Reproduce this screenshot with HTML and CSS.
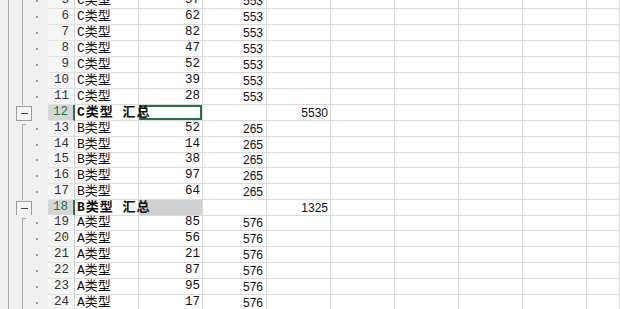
FILE: index.html
```html
<!DOCTYPE html>
<html lang="zh">
<head>
<meta charset="utf-8">
<title>分类汇总</title>
<link rel="stylesheet" href="styles.css">
</head>
<body>
<div class="sheet">
  <div class="row detail"><div class="ol"><span class="dot"></span></div><div class="rh">5</div><div class="c a">C类型</div><div class="c n mono">57</div><div class="c n c3">553</div><div class="c"></div><div class="c"></div><div class="c"></div><div class="c"></div><div class="c"></div><div class="c"></div></div>
  <div class="row detail"><div class="ol"><span class="dot"></span></div><div class="rh">6</div><div class="c a">C类型</div><div class="c n mono">62</div><div class="c n c3">553</div><div class="c"></div><div class="c"></div><div class="c"></div><div class="c"></div><div class="c"></div><div class="c"></div></div>
  <div class="row detail"><div class="ol"><span class="dot"></span></div><div class="rh">7</div><div class="c a">C类型</div><div class="c n mono">82</div><div class="c n c3">553</div><div class="c"></div><div class="c"></div><div class="c"></div><div class="c"></div><div class="c"></div><div class="c"></div></div>
  <div class="row detail"><div class="ol"><span class="dot"></span></div><div class="rh">8</div><div class="c a">C类型</div><div class="c n mono">47</div><div class="c n c3">553</div><div class="c"></div><div class="c"></div><div class="c"></div><div class="c"></div><div class="c"></div><div class="c"></div></div>
  <div class="row detail"><div class="ol"><span class="dot"></span></div><div class="rh">9</div><div class="c a">C类型</div><div class="c n mono">52</div><div class="c n c3">553</div><div class="c"></div><div class="c"></div><div class="c"></div><div class="c"></div><div class="c"></div><div class="c"></div></div>
  <div class="row detail"><div class="ol"><span class="dot"></span></div><div class="rh">10</div><div class="c a">C类型</div><div class="c n mono">39</div><div class="c n c3">553</div><div class="c"></div><div class="c"></div><div class="c"></div><div class="c"></div><div class="c"></div><div class="c"></div></div>
  <div class="row detail"><div class="ol"><span class="dot"></span></div><div class="rh">11</div><div class="c a">C类型</div><div class="c n mono">28</div><div class="c n c3">553</div><div class="c"></div><div class="c"></div><div class="c"></div><div class="c"></div><div class="c"></div><div class="c"></div></div>
  <div class="row summary"><div class="ol"><span class="box"></span></div><div class="rh sel-row">12</div><div class="c a"><span class="tot">C类型 汇总</span></div><div class="c sel"></div><div class="c"></div><div class="c n">5530</div><div class="c"></div><div class="c"></div><div class="c"></div><div class="c"></div><div class="c"></div></div>
  <div class="row detail gstart"><div class="ol"><span class="dot"></span></div><div class="rh">13</div><div class="c a">B类型</div><div class="c n mono">52</div><div class="c n c3">265</div><div class="c"></div><div class="c"></div><div class="c"></div><div class="c"></div><div class="c"></div><div class="c"></div></div>
  <div class="row detail short"><div class="ol"><span class="dot"></span></div><div class="rh">14</div><div class="c a">B类型</div><div class="c n mono">14</div><div class="c n c3">265</div><div class="c"></div><div class="c"></div><div class="c"></div><div class="c"></div><div class="c"></div><div class="c"></div></div>
  <div class="row detail"><div class="ol"><span class="dot"></span></div><div class="rh">15</div><div class="c a">B类型</div><div class="c n mono">38</div><div class="c n c3">265</div><div class="c"></div><div class="c"></div><div class="c"></div><div class="c"></div><div class="c"></div><div class="c"></div></div>
  <div class="row detail"><div class="ol"><span class="dot"></span></div><div class="rh">16</div><div class="c a">B类型</div><div class="c n mono">97</div><div class="c n c3">265</div><div class="c"></div><div class="c"></div><div class="c"></div><div class="c"></div><div class="c"></div><div class="c"></div></div>
  <div class="row detail"><div class="ol"><span class="dot"></span></div><div class="rh">17</div><div class="c a">B类型</div><div class="c n mono">64</div><div class="c n c3">265</div><div class="c"></div><div class="c"></div><div class="c"></div><div class="c"></div><div class="c"></div><div class="c"></div></div>
  <div class="row summary short"><div class="ol"><span class="box"></span></div><div class="rh sel-row">18</div><div class="c a"><span class="tot">B类型 汇总</span></div><div class="c fill"></div><div class="c"></div><div class="c n">1325</div><div class="c"></div><div class="c"></div><div class="c"></div><div class="c"></div><div class="c"></div></div>
  <div class="row detail gstart"><div class="ol"><span class="dot"></span></div><div class="rh">19</div><div class="c a">A类型</div><div class="c n mono">85</div><div class="c n c3">576</div><div class="c"></div><div class="c"></div><div class="c"></div><div class="c"></div><div class="c"></div><div class="c"></div></div>
  <div class="row detail"><div class="ol"><span class="dot"></span></div><div class="rh">20</div><div class="c a">A类型</div><div class="c n mono">56</div><div class="c n c3">576</div><div class="c"></div><div class="c"></div><div class="c"></div><div class="c"></div><div class="c"></div><div class="c"></div></div>
  <div class="row detail"><div class="ol"><span class="dot"></span></div><div class="rh">21</div><div class="c a">A类型</div><div class="c n mono">21</div><div class="c n c3">576</div><div class="c"></div><div class="c"></div><div class="c"></div><div class="c"></div><div class="c"></div><div class="c"></div></div>
  <div class="row detail"><div class="ol"><span class="dot"></span></div><div class="rh">22</div><div class="c a">A类型</div><div class="c n mono">87</div><div class="c n c3">576</div><div class="c"></div><div class="c"></div><div class="c"></div><div class="c"></div><div class="c"></div><div class="c"></div></div>
  <div class="row detail"><div class="ol"><span class="dot"></span></div><div class="rh">23</div><div class="c a">A类型</div><div class="c n mono">95</div><div class="c n c3">576</div><div class="c"></div><div class="c"></div><div class="c"></div><div class="c"></div><div class="c"></div><div class="c"></div></div>
  <div class="row detail"><div class="ol"><span class="dot"></span></div><div class="rh">24</div><div class="c a">A类型</div><div class="c n mono">17</div><div class="c n c3">576</div><div class="c"></div><div class="c"></div><div class="c"></div><div class="c"></div><div class="c"></div><div class="c"></div></div>
</div>
</body>
</html>
```

FILE: styles.css
```css
html, body {
  margin: 0;
  height: 100%;
  background: #ffffff;
  overflow: hidden;
}

.sheet {
  margin-top: -7px;
  font-family: "Liberation Sans", Arial, sans-serif;
  font-size: 12px;
  color: #111111;
}

.row {
  display: grid;
  grid-template-columns: 48px 27px repeat(8, 64px) 1fr;
  height: 16px;
}

.row.short {
  height: 15px;
}

/* outline gutter */
.ol {
  display: flex;
  align-items: center;
  background:
    linear-gradient(#a9a9a9, #a9a9a9) 8px 0 / 1px 100% no-repeat,
    #f0f0f0;
}

.detail .ol {
  background:
    linear-gradient(#a9a9a9, #a9a9a9) 8px 0 / 1px 100% no-repeat,
    linear-gradient(#a9a9a9, #a9a9a9) 22px 0 / 1px 100% no-repeat,
    #f0f0f0;
}

.gstart .ol {
  background:
    linear-gradient(#a9a9a9, #a9a9a9) 8px 0 / 1px 100% no-repeat,
    linear-gradient(#a9a9a9, #a9a9a9) 22px 3px / 1px 100% no-repeat,
    linear-gradient(#a9a9a9, #a9a9a9) 22px 3px / 4px 1px no-repeat,
    #f0f0f0;
}

.dot {
  width: 2px;
  height: 2px;
  margin-left: 36px;
  background: #9a9a9a;
}

.box {
  box-sizing: border-box;
  width: 16px;
  height: 15px;
  margin-left: 16px;
  border: 1px solid #9c9c9c;
  background: #f4f4f4;
  display: flex;
  align-items: center;
  justify-content: center;
}

.box::before {
  content: "";
  width: 7px;
  height: 1px;
  background: #444444;
}

/* row headers */
.rh {
  box-sizing: border-box;
  border-right: 1px solid #d0d0d0;
  border-bottom: 1px solid #e2e2e2;
  background: #f6f6f6;
  font-family: "Liberation Mono", monospace;
  font-size: 12.5px;
  line-height: 15px;
  text-align: right;
  padding-right: 5px;
  color: #333333;
}

.rh.sel-row {
  background: #d6d6d6;
  color: #217346;
  border-right: 2px solid #217346;
}

/* cells */
.c {
  box-sizing: border-box;
  border-right: 1px solid #dadada;
  border-bottom: 1px solid #dadada;
  line-height: 15px;
  padding-top: 1px;
  white-space: nowrap;
  overflow: hidden;
}

.a {
  padding-left: 2px;
  padding-top: 0;
  font-family: "Liberation Mono", "Noto Sans CJK SC", monospace;
  font-size: 13px;
  overflow: visible;
}

.n {
  text-align: right;
  padding-right: 2px;
}

.c3 {
  padding-right: 3px;
}

.mono {
  font-family: "Liberation Mono", monospace;
  font-size: 12.5px;
  padding-top: 0;
}

.tot {
  position: relative;
  z-index: 1;
  font-weight: bold;
  letter-spacing: 1px;
}

.sel {
  box-shadow: inset 0 0 0 2px #217346;
}

.fill {
  background: #d0d0d0;
}
```
